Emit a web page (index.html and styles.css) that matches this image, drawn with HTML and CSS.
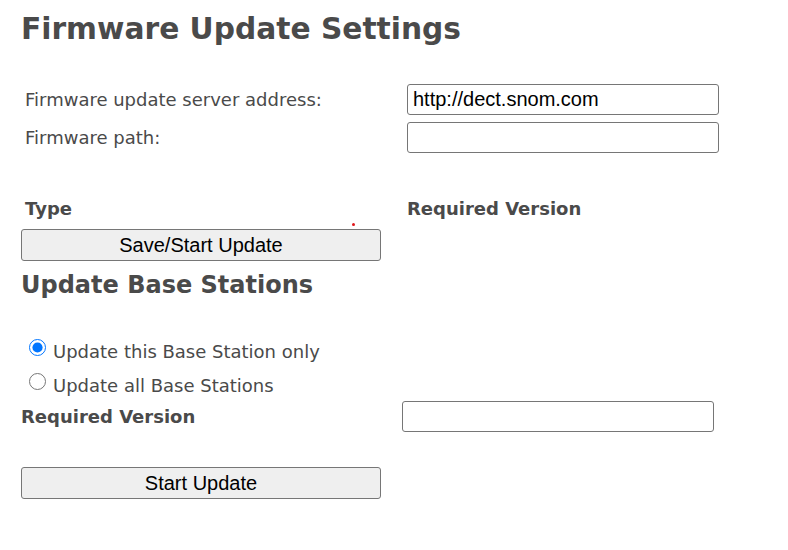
FILE: index.html
```html
<!DOCTYPE html>
<html lang="en">
<head>
    <meta charset="UTF-8">
    <title>Firmware Update Settings</title>
    <link rel="stylesheet" href="styles.css">
</head>
<body>
    <div class="page">
        <h1>Firmware Update Settings</h1>

        <div class="settings">
            <label for="srv">Firmware update server address:</label>
            <input type="text" id="srv" value="http://dect.snom.com">
            <label for="path">Firmware path:</label>
            <input type="text" id="path">
        </div>

        <div class="heads">
            <span>Type</span>
            <span>Required Version</span>
            <i class="dot"></i>
        </div>
        <button class="btn">Save/Start Update</button>

        <h2>Update Base Stations</h2>

        <div class="radios">
            <label class="opt"><input type="radio" name="bs" checked>Update this Base Station only</label>
            <label class="opt"><input type="radio" name="bs">Update all Base Stations</label>
        </div>

        <div class="reqrow">
            <span>Required Version</span>
            <input type="text">
        </div>

        <button class="btn start">Start Update</button>
    </div>
</body>
</html>
```

FILE: styles.css
```css
* {
    box-sizing: border-box;
}
body {
    margin: 0;
    background: #fff;
    font-family: "DejaVu Sans", Verdana, sans-serif;
    font-size: 18px;
    color: #4a4a4a;
}
.page {
    padding-left: 21px;
}
h1 {
    margin: 11px 0 0;
    font-size: 29.7px;
    font-weight: bold;
}
h2 {
    margin: 10px 0 0;
    font-size: 24px;
    font-weight: bold;
}
input[type=text] {
    width: 312px;
    height: 31px;
    border: 1px solid #767676;
    border-radius: 3px;
    padding: 0 5px;
    font-family: "Liberation Sans", Arial, sans-serif;
    font-size: 20px;
    color: #000;
}
.settings {
    display: grid;
    grid-template-columns: 382px 312px;
    row-gap: 7px;
    align-items: center;
    margin: 38px 0 0 4px;
}
.heads {
    position: relative;
    display: grid;
    grid-template-columns: 382px 312px;
    margin: 45px 0 0 4px;
    line-height: 21px;
    font-weight: bold;
}
.dot {
    position: absolute;
    left: 327px;
    top: 25px;
    width: 3px;
    height: 3px;
    border-radius: 50%;
    background: #e0161b;
}
.btn {
    display: block;
    width: 360px;
    height: 32px;
    margin-top: 10px;
    background: #efefef;
    border: 1px solid #767676;
    border-radius: 3px;
    font-family: "Liberation Sans", Arial, sans-serif;
    font-size: 20px;
    color: #000;
}
.radios {
    display: flex;
    flex-direction: column;
    gap: 13px;
    margin-top: 42px;
}
.opt {
    display: flex;
    align-items: center;
    height: 21px;
    line-height: 21px;
}
.opt input {
    width: 17px;
    height: 17px;
    margin: 0 7px 9px 8px;
    accent-color: #0075ff;
}
.reqrow {
    display: grid;
    grid-template-columns: 381px 312px;
    align-items: center;
    margin-top: 5px;
    font-weight: bold;
}
.start {
    margin-top: 35px;
}
```
